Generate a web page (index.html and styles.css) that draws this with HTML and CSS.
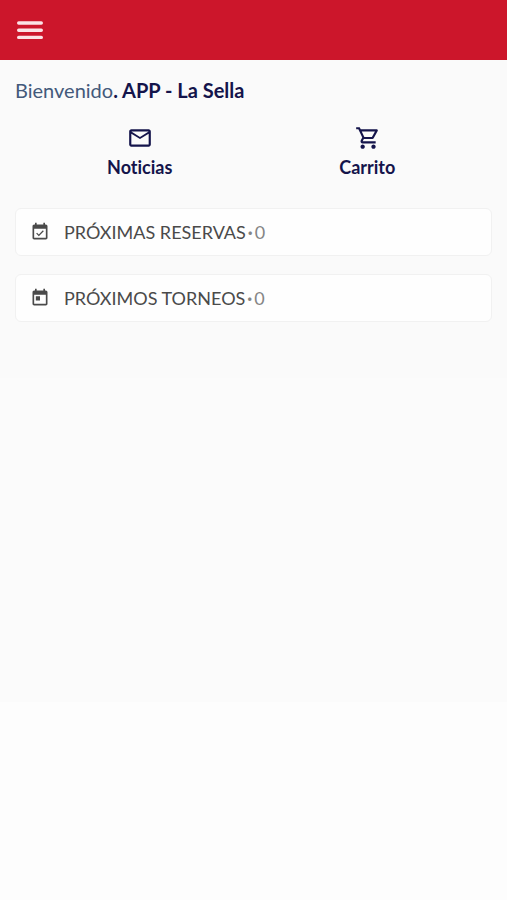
FILE: index.html
```html
<!DOCTYPE html>
<html lang="es">
<head>
  <meta charset="utf-8">
  <meta name="viewport" content="width=device-width, initial-scale=1">
  <title>La Sella</title>
  <link rel="stylesheet" href="styles.css">
</head>
<body>

<header class="topbar">
  <button class="menu-button" type="button" aria-label="Menú">
    <svg width="26" height="20" viewBox="0 0 26 20">
      <path d="M1.7 3h22.6M1.7 10.2h22.6M1.7 17.4h22.6" stroke="currentColor" stroke-width="3.4" stroke-linecap="round"/>
    </svg>
  </button>
</header>

<main class="content">
  <h1 class="welcome"><span>Bienvenido</span>. APP - La Sella</h1>

  <nav class="shortcuts">
    <a class="shortcut" href="#noticias">
      <svg width="26" height="26" viewBox="0 0 24 24">
        <path d="M20 4H4c-1.1 0-2 .9-2 2v12c0 1.1.9 2 2 2h16c1.1 0 2-.9 2-2V6c0-1.1-.9-2-2-2zm0 14H4V8l8 5 8-5v10zm-8-7L4 6h16l-8 5z"/>
      </svg>
      Noticias
    </a>
    <a class="shortcut" href="#carrito">
      <svg width="26" height="26" viewBox="-1 0 24 24">
        <path d="M15.55 13c.75 0 1.41-.41 1.75-1.03l3.58-6.49A.996.996 0 0 0 20.01 4H5.21l-.94-2H1v2h2l3.6 7.59-1.35 2.44C4.52 15.37 5.48 17 7 17h12v-2H7l1.1-2h7.45zM6.16 6h12.15l-2.76 5H8.53L6.16 6zM7 18c-1.1 0-1.99.9-1.99 2S5.9 22 7 22s2-.9 2-2-.9-2-2-2zm10 0c-1.1 0-1.99.9-1.99 2s.89 2 1.99 2 2-.9 2-2-.9-2-2-2z"/>
      </svg>
      Carrito
    </a>
  </nav>

  <div class="panels">
    <button class="panel" type="button">
      <svg width="20" height="20" viewBox="0 0 24 24">
        <path d="M16.53 11.06L15.47 10l-4.88 4.88-2.12-2.12-1.06 1.06L10.59 17l5.94-5.94zM19 3h-1V1h-2v2H8V1H6v2H5c-1.11 0-1.99.9-1.99 2L3 19c0 1.1.89 2 2 2h14c1.1 0 2-.9 2-2V5c0-1.1-.9-2-2-2zm0 16H5V8h14v11z"/>
      </svg>
      <span class="panel-title">PRÓXIMAS RESERVAS <span class="count"><b>·</b> 0</span></span>
    </button>
    <button class="panel" type="button">
      <svg width="20" height="20" viewBox="0 0 24 24">
        <path d="M19 3h-1V1h-2v2H8V1H6v2H5c-1.11 0-1.99.9-1.99 2L3 19c0 1.1.89 2 2 2h14c1.1 0 2-.9 2-2V5c0-1.1-.9-2-2-2zm0 16H5V8h14v11zM7 10h5v5H7z"/>
      </svg>
      <span class="panel-title">PRÓXIMOS TORNEOS <span class="count"><b>·</b> 0</span></span>
    </button>
  </div>
</main>

</body>
</html>
```

FILE: styles.css
```css
body {
  margin: 0;
  min-height: 100vh;
  background: linear-gradient(#fafafa, #fafafa 42%, #fbfbfb 42%, #fbfbfb 78%, #fdfdfd 78%);
  color: #14144b;
  font-family: Lato, sans-serif;
  font-variant-ligatures: none;
}
svg {
  display: block;
  flex: none;
  fill: currentColor;
}
.topbar {
  display: flex;
  align-items: center;
  height: 60px;
  padding: 0 17px;
  background-color: #cc162b;
}
.menu-button {
  padding: 0;
  border: 0;
  background: none;
  color: #fbe3e6;
}
.content {
  padding: 18px 15px;
}
.welcome {
  margin: 0;
  font-size: 20px;
  line-height: 24px;
  font-weight: bold;
}
.welcome span {
  color: #43597a;
  font-weight: normal;
}
.shortcuts {
  display: grid;
  grid-template-columns: 1fr 1fr;
  padding: 23px 11px 0;
}
.shortcut {
  display: flex;
  flex-direction: column;
  align-items: center;
  gap: 4px;
  color: inherit;
  font-size: 18px;
  line-height: 24px;
  font-weight: bold;
  text-decoration: none;
}
.panels {
  display: flex;
  flex-direction: column;
  gap: 18px;
  margin-top: 29px;
}
.panel {
  display: flex;
  align-items: center;
  gap: 14px;
  padding: 11px 14px;
  border: 1px solid #f1f1f1;
  border-radius: 6px;
  background-color: #fefefe;
  color: #4a4a4a;
  font-family: inherit;
  font-size: 18px;
  line-height: 24px;
  text-align: left;
}
.panel-title {
  display: flex;
  gap: 2px;
}
.count {
  display: flex;
  gap: 2px;
  color: #858585;
}
```
